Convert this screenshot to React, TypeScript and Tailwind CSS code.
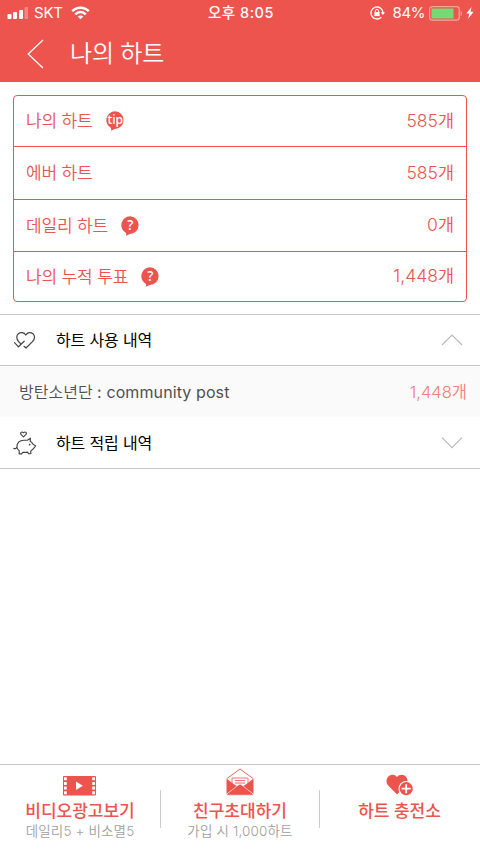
import React from "react";

const KR = "font-['Inter','Noto_Sans_CJK_KR',sans-serif]";

function StatusBar() {
  return (
    <div className="relative flex h-[26px] items-center text-white">
      <svg className="ml-[7px]" width="21" height="12" viewBox="0 0 21 12" fill="currentColor">
        <rect x="0.5" y="7" width="4" height="5" rx="1" />
        <rect x="6" y="5" width="4" height="7" rx="1" />
        <rect x="12" y="3" width="4" height="9" rx="1" />
        <rect x="17.5" y="0" width="4" height="12" rx="1" opacity="0.3" />
      </svg>
      <span className="ml-[6px] text-[15px] leading-[26px] tracking-[-0.2px]">SKT</span>
      <svg className="ml-[8px]" width="19" height="14" viewBox="0 0 19 14" fill="none" stroke="currentColor" strokeWidth="2.4">
        <path d="M1.2 5.2C5.8 0.5 13.2 0.5 17.8 5.2" />
        <path d="M4.3 8.3C7.2 5.3 11.8 5.3 14.7 8.3" />
        <path d="M6.7 10.6C8.2 9.1 10.8 9.1 12.3 10.6L9.5 13.3Z" fill="currentColor" stroke="none" />
      </svg>
      <span className="absolute left-[208px] top-0 whitespace-nowrap text-[14.5px] font-medium leading-[26px] tracking-[0.5px]">
        오후 8:05
      </span>
      <div className="ml-auto flex items-center">
        <svg width="15" height="14" viewBox="0 0 15 14" fill="none" stroke="currentColor" strokeWidth="1.3">
          <path d="M11.3 11.2A6 6 0 1 1 13 7" />
          <path d="M10.8 6.3H15L12.9 9Z" fill="currentColor" stroke="none" />
          <rect x="4.4" y="6.1" width="5.2" height="4" fill="currentColor" stroke="none" />
          <path d="M5.4 6.5V5A1.6 1.6 0 0 1 8.6 5V6.5" strokeWidth="1" />
        </svg>
        <span className="ml-[8px] text-[15px] leading-[26px] tracking-[-0.4px]">84%</span>
        <svg className="ml-[4px]" width="34" height="15" viewBox="0 0 34 15">
          <rect x="0.6" y="0.6" width="29.6" height="13.6" rx="2.6" fill="none" stroke="#f6a7a2" strokeWidth="1.2" />
          <rect x="2.5" y="2.5" width="22" height="10" fill="#78d873" />
          <path d="M31.6 5V10C33.4 9.4 33.4 5.6 31.6 5Z" fill="#f6a7a2" />
        </svg>
        <svg className="ml-[3px] mr-[6px]" width="8" height="12" viewBox="0 0 8 12" fill="currentColor">
          <path d="M5.6 0L0.3 6.6H3.3L2 12L7.6 4.8H4.5Z" />
        </svg>
      </div>
    </div>
  );
}

function Bubble({ label }: { label: string }) {
  const tip = label === "tip";
  return (
    <svg className="ml-[13px] overflow-visible" width="18" height="20" viewBox="0 0 18 20">
      <path d="M9 0.3A8.8 8.8 0 1 1 8.6 17.9L5.2 19.7L5 16.9A8.8 8.8 0 0 1 9 0.3Z" fill="#ec544d" />
      <text
        x="9.2"
        y={tip ? 12.6 : 13.6}
        textAnchor="middle"
        fill="#fff"
        className={tip ? "font-['Open_Sans',sans-serif] text-[12px] font-semibold" : "font-['Open_Sans',sans-serif] text-[13.5px] font-semibold"}
      >
        {label}
      </text>
    </svg>
  );
}

function HeartRow({ label, tip, value, size }: { label: string; tip?: string; value: string; size: string }) {
  return (
    <div className={`flex items-center border-[#ec544d] pl-[12px] pr-[12px] text-[17px] font-[350] text-[#ec544d] ${size}`}>
      <span className="pt-[2px] tracking-[-0.15px]">{label}</span>
      {tip && <Bubble label={tip} />}
      <span className="ml-auto text-[17.5px]">{value}</span>
    </div>
  );
}

function Chevron({ up }: { up?: boolean }) {
  return (
    <svg className="ml-auto mr-[17px]" width="22" height="12" viewBox="0 0 22 12" fill="none" stroke="#b8b8b8" strokeWidth="1.1">
      <path d={up ? "M1 11L11 1L21 11" : "M1 0.7L11 10.7L21 0.7"} />
    </svg>
  );
}

function HeartsIcon() {
  return (
    <svg className="mt-px" width="24" height="20" viewBox="0 0 24 20" fill="none" stroke="#444" strokeWidth="1.2" strokeLinecap="round" strokeLinejoin="round">
      <path d="M7.6 12.6L5.5 10.5C3.2 8 3.3 4.4 5.3 2.8C7.7 0.8 11.1 1.4 12.8 4C14.5 1.4 17.7 0.9 20 2.8C22.2 4.8 21.9 8.2 19.7 10.4L13 17L11 15.3" />
      <path d="M1.5 11.6L5.5 15.8L11.2 10.2" />
    </svg>
  );
}

function PiggyIcon() {
  return (
    <svg className="mt-px" width="24" height="25" viewBox="0 0 24 25" fill="none" stroke="#444" strokeWidth="1.15" strokeLinecap="round" strokeLinejoin="round">
      <path d="M10.5 5.8L8 3.4C6.7 1.8 8.7 0.1 10.5 1.7C12.3 0.1 14.3 1.8 13 3.4Z" />
      <path d="M0.8 17.4C2.4 18 3.6 17.4 3.9 15.8C4.1 11.6 6.9 9.2 11 9.2H14.4L17.3 7.2V10.2C18.6 11 19.3 12 19.9 13.1L22.6 15L20.2 17.8C19.4 18.7 18.8 19.4 17.8 20V22.7H15.6L14.5 21.1C12.7 21.5 11.3 21.5 9.7 21.2L8.6 22.9H6.2V19.8C4.9 19 4.1 17.7 3.9 15.8" />
      <circle cx="16.7" cy="13.6" r="0.9" fill="#444" stroke="none" />
    </svg>
  );
}

function SectionRow({ icon, title, up, size }: { icon: React.ReactNode; title: string; up?: boolean; size: string }) {
  return (
    <div className={`flex items-center pl-[13px] text-[16px] text-black ${size}`}>
      <div className="w-[43px]">{icon}</div>
      <span className="tracking-[-0.15px]">{title}</span>
      <Chevron up={up} />
    </div>
  );
}

function VideoIcon() {
  return (
    <svg className="mr-px" width="33" height="20" viewBox="0 0 33 20">
      <rect width="33" height="19.5" rx="0.8" fill="#ec544d" />
      <g fill="#fff">
        {[1.2, 5.9, 10.6, 15.3].map((y) => (
          <React.Fragment key={y}>
            <rect x="1" y={y} width="2.8" height="3" rx="0.4" />
            <rect x="29.2" y={y} width="2.8" height="3" rx="0.4" />
          </React.Fragment>
        ))}
        <path d="M13 5.5V14L19.8 9.7Z" />
      </g>
    </svg>
  );
}

function LetterIcon() {
  return (
    <svg width="28" height="28" viewBox="0 0 28 28">
      <path d="M1 10.5L14 1L27 10.5" fill="none" stroke="#ec544d" strokeWidth="0.9" />
      <path d="M6 16V10H22V16L14 20Z" fill="#fff" stroke="#ec544d" strokeWidth="0.8" />
      <path d="M9 12.6H19M9 15H19" stroke="#ec544d" strokeWidth="0.9" />
      <path d="M0.5 10.5L10.6 18.5L0.5 26Z" fill="#ec544d" />
      <path d="M27.5 10.5L17.4 18.5L27.5 26Z" fill="#ec544d" />
      <path d="M0.7 26.2L12.3 17Q14 15.7 15.7 17L27.3 26.2Q27 27.2 26 27.2H2Q1 27.2 0.7 26.2Z" fill="#ec544d" stroke="#fff" strokeWidth="0.5" />
    </svg>
  );
}

function HeartPlusIcon() {
  return (
    <svg width="28" height="22" viewBox="0 0 28 22">
      <path d="M11 20.5L2 11.2C-0.4 8.4 0.2 4 3 2C5.6 0 9.2 0.5 11 3.2C12.8 0.5 16.6 0 19.2 2C22.1 4.4 22.2 8.4 19.8 11.2Z" fill="#ec544d" />
      <circle cx="20.2" cy="14.7" r="7.7" fill="#fff" />
      <circle cx="20.2" cy="14.7" r="6.6" fill="#ec544d" />
      <path d="M15.7 14.7H24.7M20.2 10.2V19.2" stroke="#fff" strokeWidth="1.8" />
    </svg>
  );
}

function Tab({ icon, title, sub, width }: { icon: React.ReactNode; title: string; sub?: string; width: string }) {
  return (
    <div className={`flex flex-col items-center ${width}`}>
      <div className="flex h-[31px] items-end justify-center">{icon}</div>
      <span className="mt-[3px] whitespace-nowrap text-[17px] font-medium leading-[24px] text-[#ec544d]">{title}</span>
      <span className="whitespace-nowrap text-[13.5px] font-[350] leading-[17px] tracking-[0.15px] text-[#a0a0a0]">{sub}</span>
    </div>
  );
}

export default function App() {
  return (
    <div className={`flex h-[854px] w-[480px] flex-col overflow-hidden bg-white ${KR}`}>
      <header className="h-[82px] bg-[#ed544d]">
        <StatusBar />
        <div className="flex h-[56px] items-center text-white">
          <svg className="ml-[27px]" width="17" height="30" viewBox="0 0 17 30" fill="none" stroke="currentColor" strokeWidth="1.3">
            <path d="M16 1L1.2 15L16 29" />
          </svg>
          <h1 className="ml-[26px] text-[24px] font-[350] leading-[56px] tracking-[-0.2px]">나의 하트</h1>
        </div>
      </header>

      <section className="mx-[13px] mt-[13px] h-[207px] rounded-[4px] border border-[#ec544d]">
        <HeartRow size="h-[51px] border-b" label="나의 하트" tip="tip" value="585개" />
        <HeartRow size="h-[53px] border-b" label="에버 하트" value="585개" />
        <HeartRow size="h-[52px] border-b" label="데일리 하트" tip="?" value="0개" />
        <HeartRow size="h-[49px]" label="나의 누적 투표" tip="?" value="1,448개" />
      </section>

      <section className="mt-[12px] border-y border-[#c8c8c8]">
        <SectionRow size="h-[50px]" icon={<HeartsIcon />} title="하트 사용 내역" up />
      </section>
      <div className="flex h-[51px] items-center bg-[#fafafa] pl-[19px] pr-[13px] text-[16px] font-[350]">
        <span className="text-[#505050]">
          방탄소년단 <span className="font-normal tracking-[0.1px]">: community post</span>
        </span>
        <span className="ml-auto pt-[1px] text-[16.5px] text-[#f4807b]">1,448개</span>
      </div>
      <section className="border-b border-[#c8c8c8]">
        <SectionRow size="h-[51px]" icon={<PiggyIcon />} title="하트 적립 내역" />
      </section>

      <footer className="mt-auto flex h-[90px] items-start border-t border-[#c8c8c8]">
        <Tab width="w-[160px]" icon={<VideoIcon />} title="비디오광고보기" sub="데일리5 + 비소멸5" />
        <div className="mt-[25px] h-[38px] w-px bg-[#ccc]" />
        <Tab width="w-[158px]" icon={<LetterIcon />} title="친구초대하기" sub="가입 시 1,000하트" />
        <div className="mt-[25px] h-[38px] w-px bg-[#ccc]" />
        <Tab width="w-[159px]" icon={<HeartPlusIcon />} title="하트 충전소" />
      </footer>
    </div>
  );
}
